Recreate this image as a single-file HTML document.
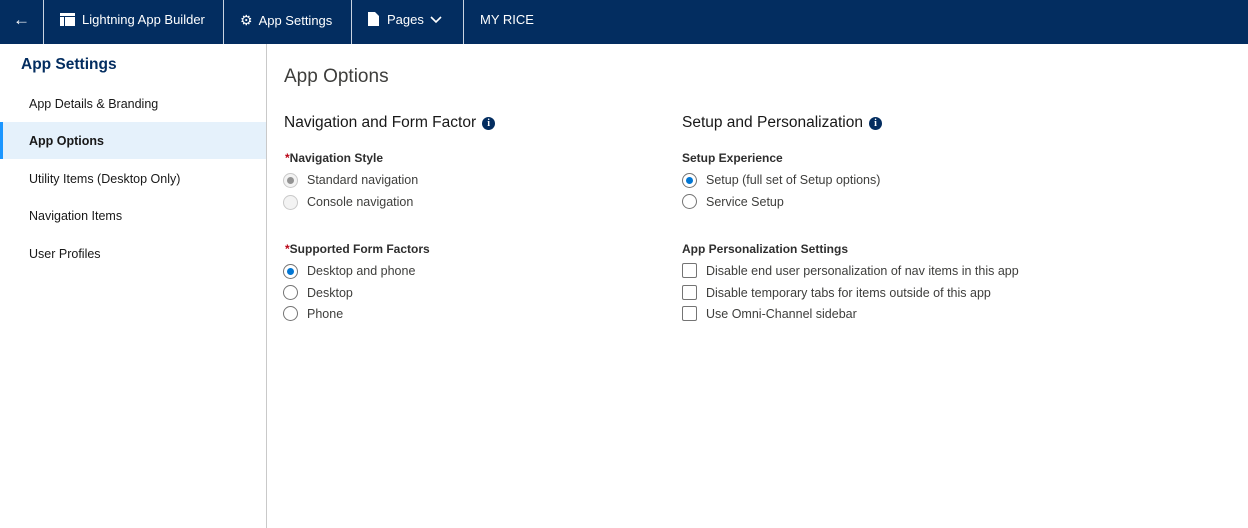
<!DOCTYPE html>
<html><head><style>
*{box-sizing:border-box;margin:0;padding:0}
body{width:1248px;height:528px;overflow:hidden;font-family:"Liberation Sans",sans-serif;color:#181818;background:#fff;position:relative}
.top{position:absolute;left:0;top:0;width:1248px;height:44px;background:#032d60;color:#fff;font-size:13px}
.top .it{position:absolute;top:0;height:44px;line-height:40px;border-right:1px solid #c9d3e0}
.side{position:absolute;left:0;top:44px;width:267px;height:484px;border-right:1px solid #c9c9c9}
.side h2{position:absolute;left:21px;top:12px;font-size:15.5px;font-weight:bold;color:#032d60}
.si{position:absolute;left:0;width:266px;height:37px;line-height:39px;padding-left:29px;font-size:12.5px;color:#181818}
.act{background:#e5f1fb;font-weight:bold;border-left:3px solid #1b96ff;padding-left:26px}
.t{position:absolute;white-space:nowrap}
.h{font-size:15.5px;color:#181818}
.lab{font-size:12px;font-weight:bold;color:#2e2e2e}
.opt{font-size:12.5px;color:#3e3e3c}
.r{position:absolute;width:15px;height:15px;border:1px solid #747474;border-radius:50%;background:#fff}
.r.on::after{content:"";position:absolute;left:3px;top:3px;width:7px;height:7px;border-radius:50%;background:#0176d3}
.r.dis{border-color:#c9c9c9;background:#f3f3f3}
.r.dis.on::after{background:#939393}
.c{position:absolute;width:15px;height:15px;border:1px solid #747474;border-radius:2px}
.i{display:inline-block;width:13px;height:13px;border-radius:50%;background:#032d60;color:#fff;font-size:10px;font-weight:bold;text-align:center;line-height:13px;font-family:"Liberation Serif",serif;vertical-align:1px;margin-left:6px}
.req{color:#ba0517}
</style></head><body>
<div class="top">
 <div class="it" style="left:0;width:44px;text-align:center;font-size:17px">&#8592;</div>
 <div class="it" style="left:44px;width:180px;padding-left:16px"><svg width="15" height="13" viewBox="0 0 15 13" style="vertical-align:-2px;margin-right:7px"><rect x="0" y="0" width="15" height="3" fill="#fff"/><rect x="0" y="4" width="4" height="9" fill="#fff"/><rect x="5" y="4" width="10" height="9" fill="#fff"/></svg>Lightning App Builder</div>
 <div class="it" style="left:224px;width:128px;padding-left:16px"><span style="font-size:14px;margin-right:6px">&#9881;</span>App Settings</div>
 <div class="it" style="left:352px;width:112px;padding-left:16px"><svg width="11" height="14" viewBox="0 0 11 14" style="vertical-align:-2px;margin-right:8px"><path d="M0 0H7L11 4V14H0Z" fill="#fff"/></svg>Pages <svg width="12" height="8" viewBox="0 0 12 8" style="margin-left:3px"><path d="M1 1L6 6L11 1" stroke="#fff" stroke-width="1.6" fill="none"/></svg></div>
 <div class="t" style="left:480px;top:0;line-height:40px">MY RICE</div>
</div>
<div class="side">
 <h2>App Settings</h2>
 <div class="si" style="top:41px">App Details &amp; Branding</div>
 <div class="si act" style="top:78px">App Options</div>
 <div class="si" style="top:116px">Utility Items (Desktop Only)</div>
 <div class="si" style="top:153px">Navigation Items</div>
 <div class="si" style="top:191px">User Profiles</div>
</div>
<div class="t" style="left:284px;top:66px;font-size:19px;font-weight:300;color:#3e3e3c">App Options</div>
<div class="t h" style="left:284px;top:114px">Navigation and Form Factor<span class="i">i</span></div>
<div class="t lab" style="left:285px;top:151px"><span class="req">*</span>Navigation Style</div>
<div class="r dis on" style="left:283px;top:173px"></div><div class="t opt" style="left:307px;top:173px">Standard navigation</div>
<div class="r dis" style="left:283px;top:195px"></div><div class="t opt" style="left:307px;top:195px">Console navigation</div>
<div class="t lab" style="left:285px;top:242px"><span class="req">*</span>Supported Form Factors</div>
<div class="r on" style="left:283px;top:264px"></div><div class="t opt" style="left:307px;top:264px">Desktop and phone</div>
<div class="r" style="left:283px;top:285px"></div><div class="t opt" style="left:307px;top:286px">Desktop</div>
<div class="r" style="left:283px;top:306px"></div><div class="t opt" style="left:307px;top:307px">Phone</div>

<div class="t h" style="left:682px;top:114px">Setup and Personalization<span class="i">i</span></div>
<div class="t lab" style="left:682px;top:151px">Setup Experience</div>
<div class="r on" style="left:682px;top:173px"></div><div class="t opt" style="left:706px;top:173px">Setup (full set of Setup options)</div>
<div class="r" style="left:682px;top:194px"></div><div class="t opt" style="left:706px;top:195px">Service Setup</div>
<div class="t lab" style="left:682px;top:242px">App Personalization Settings</div>
<div class="c" style="left:682px;top:263px"></div><div class="t opt" style="left:706px;top:264px">Disable end user personalization of nav items in this app</div>
<div class="c" style="left:682px;top:285px"></div><div class="t opt" style="left:706px;top:286px">Disable temporary tabs for items outside of this app</div>
<div class="c" style="left:682px;top:306px"></div><div class="t opt" style="left:706px;top:307px">Use Omni-Channel sidebar</div>
</body></html>
